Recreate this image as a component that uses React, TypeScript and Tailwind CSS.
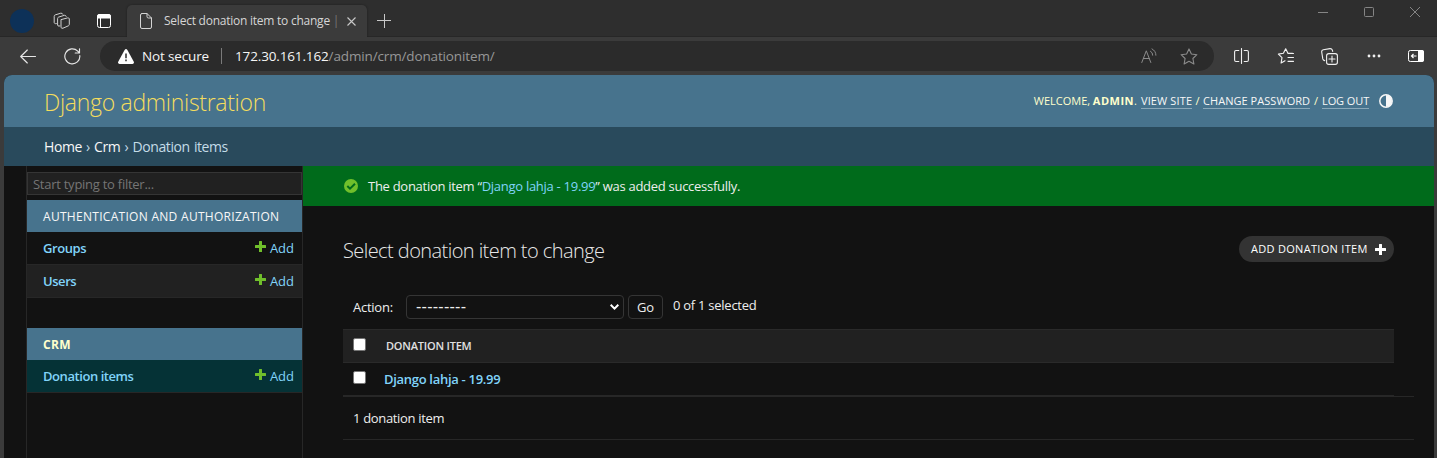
import React from "react";

const stroke = { fill: "none", strokeLinecap: "round", strokeLinejoin: "round" } as const;

function TabStrip() {
  return (
    <div className="flex h-[37px] border-b border-[#272727] bg-[#2e2e2e]">
      <div className="mt-[9px] ml-[10px] size-6 rounded-full bg-[#0d3158]" />
      <svg className="mt-[12px] ml-[19px]" width="18" height="18" viewBox="0 0 18 18" stroke="#d0d0d0" strokeWidth="1" {...stroke}>
        <path d="M8.2 7.6 14.6 5.9Q16 5.6 16.3 6.8V12.4Q16.3 13.4 15.4 13.8L10 16.2Q8.3 16.8 8 15.2V8.2Q8 7.7 8.6 7.5Z" />
        <path d="M6.8 13.9 6 14.1Q4.8 14.2 4.6 13V6.6Q4.6 5.4 5.6 5.1L11.4 3.3Q12.8 3 13.2 4.4" />
        <path d="M3.4 11.6 2.6 11.7Q1.4 11.6 1.2 10.5V4.4Q1.2 3.2 2.2 2.9L7.8 1.2Q9.3.9 9.8 2.2" />
      </svg>
      <svg className="mt-[14px] ml-[26px]" width="14" height="14" viewBox="0 0 14 14">
        <rect x=".5" y=".5" width="13" height="13" rx="2" fill="none" stroke="#fff" />
        <path d="M0 4.5V2.5Q0 0 2.5 0H11.5Q14 0 14 2.5V4.5Z" fill="#fff" />
        <path d="M3.5 4V14" stroke="#fff" />
      </svg>
      <div className="mt-[5px] ml-[16px] flex h-8 w-[240px] rounded-t-[5px] bg-[#3b3b3b] shadow-[0_0_2px_#1c1c1c]">
        <svg className="mt-[8px] ml-[13px]" width="12" height="16" viewBox="0 0 12 16" stroke="#d4d4d4" {...stroke}>
          <path d="M2 .5H7L11.5 5V14Q11.5 15.5 10 15.5H2Q.5 15.5.5 14V2Q.5.5 2 .5ZM7 .5V3.6Q7 5 8.4 5H11.5" />
        </svg>
        <div className="mt-[7px] ml-[12px] w-[173px] text-[12px] leading-[18px] tracking-[-0.24px] whitespace-nowrap text-[#d6d6d6]">
          Select donation item to change <span className="text-[#777]">|</span>
        </div>
        <svg className="mt-[12px] ml-[10px]" width="9" height="9" viewBox="0 0 9 9" stroke="#c9c9c9" strokeWidth="1.1">
          <path d="M.5.5 8.5 8.5M8.5.5.5 8.5" />
        </svg>
      </div>
      <svg className="mt-[14px] ml-[10px]" width="14" height="14" viewBox="0 0 14 14" stroke="#c8c8c8">
        <path d="M7.5 0V14M0 6.5H14" />
      </svg>
      <div className="ml-auto flex pt-[7px]">
        <svg width="10" height="11" viewBox="0 0 10 11" stroke="#858585"><path d="M0 5.5H10" /></svg>
        <svg className="ml-[36px]" width="10" height="10" viewBox="0 0 10 10" fill="none" stroke="#858585"><rect x=".5" y=".5" width="9" height="9" rx="1" /></svg>
        <svg className="mr-[17px] ml-[36px]" width="10" height="10" viewBox="0 0 10 10" stroke="#858585"><path d="M0 0 10 10M10 0 0 10" /></svg>
      </div>
    </div>
  );
}

function Toolbar() {
  return (
    <div className="flex h-[38px] items-center bg-[#3b3b3b]">
      <svg className="ml-5" width="16" height="15" viewBox="0 0 16 15" stroke="#e6e6e6" strokeWidth="1.15" {...stroke}>
        <path d="M15.5 7.5H.8M7.3 1 .7 7.5 7.3 14" />
      </svg>
      <svg className="ml-7" width="17" height="17" viewBox="0 0 17 17" stroke="#e6e6e6" strokeWidth="1.15" {...stroke}>
        <path d="M15.8 7.6A7.5 7.5 0 1 1 13.7 3.1L15.5 4.9M15.5.8V5H11.2" />
      </svg>
      <div className="ml-[19px] flex h-[30px] w-[1114px] items-center rounded-full bg-[#2b2b2b]">
        <svg className="ml-[18px]" width="16" height="15" viewBox="0 0 16 15">
          <path d="M6.6.9Q8-.8 9.4.9L15.8 12.7Q16.4 14.8 14.5 15H1.5Q-.4 14.8.2 12.7Z" fill="#fff" />
          <path d="M8 4.5V9.2M8 10.6V12.2" stroke="#2b2b2b" strokeWidth="1.5" />
        </svg>
        <span className="ml-2 w-[68px] text-[13.5px] leading-[18px] tracking-[-0.15px] whitespace-nowrap text-[#f5f5f5]">Not secure</span>
        <div className="ml-[11px] h-4 w-px bg-[#7a7a7a]" />
        <span className="ml-[13px] text-[13.5px] leading-[18px] tracking-[-0.14px] whitespace-nowrap text-[#979797]">
          <span className="text-[#f5f5f5]">172.30.161.162</span>/admin/crm/donationitem/
        </span>
        <svg className="ml-auto" width="16" height="16" viewBox="0 0 16 16" stroke="#8b8b8b" {...stroke}>
          <path d="M.8 14.5 5.3 2.8 9.8 14.5M2.4 10.5H8.2M9.5 3.2Q11.8 4.4 11.7 7.2M11 .9Q15 3 14.9 7.2" />
        </svg>
        <svg className="mr-4 ml-[23px]" width="18" height="17" viewBox="0 0 18 17" stroke="#8b8b8b" strokeWidth="1.1" {...stroke}>
          <path d="M9 .9 11.4 6 16.9 6.7 12.9 10.5 13.9 16 9 13.3 4.1 16 5.1 10.5 1.1 6.7 6.6 6Z" />
        </svg>
      </div>
      <svg className="ml-5" width="15" height="16" viewBox="0 0 15 16" stroke="#f0f0f0" strokeWidth="1.1" {...stroke}>
        <path d="M7.5.5V15.5M4.8 2.5H2Q.6 2.5.6 4V12Q.6 13.5 2 13.5H4.8M10.2 2.5H13Q14.4 2.5 14.4 4V12Q14.4 13.5 13 13.5H10.2" />
      </svg>
      <svg className="ml-[28px]" width="18" height="16" viewBox="0 0 18 16" stroke="#f0f0f0" strokeWidth="1.15" {...stroke}>
        <path d="M15.5 5.3 10.8 5 8.7.8 6.4 5.3 1.4 6.1 5 9.7 4.1 15 8 12.8M11 5.5H16.5M11 9.5H16.5M11 13.3H16.5" />
      </svg>
      <svg className="ml-[26px]" width="17" height="17" viewBox="0 0 17 17" stroke="#f0f0f0" strokeWidth="1.1" {...stroke}>
        <rect x="5.6" y="5.6" width="10.8" height="10.8" rx="2.2" />
        <path d="M11 8V14M8 11H14M3.7 12.6Q2.1 12.4 1.8 10.9L.7 4Q.5 2.2 2.3 1.8L9 .6Q10.8.5 11.4 2.2L11.7 3.4" />
      </svg>
      <svg className="ml-[29px]" width="14" height="4" viewBox="0 0 14 4" fill="#f0f0f0">
        <circle cx="2" cy="2" r="1.4" /><circle cx="7" cy="2" r="1.4" /><circle cx="12" cy="2" r="1.4" />
      </svg>
      <svg className="ml-[27px]" width="16" height="12" viewBox="0 0 16 12">
        <rect x=".5" y=".5" width="15" height="11" rx="1.8" fill="none" stroke="#fff" />
        <path d="M10 0H14Q16 0 16 2V10Q16 12 14 12H10Z" fill="#fff" />
        <path d="M8.5 6H3.5M5.5 4 3.5 6 5.5 8" stroke="#fff" strokeWidth="1.2" fill="none" />
      </svg>
    </div>
  );
}

function Plus({ className, fill }: { className?: string; fill: string }) {
  return (
    <svg className={className} width="11" height="11" viewBox="0 0 11 11" fill={fill}>
      <path d="M4 .5Q4 0 4.5 0H6.5Q7 0 7 .5V4H10.5Q11 4 11 4.5V6.5Q11 7 10.5 7H7V10.5Q7 11 6.5 11H4.5Q4 11 4 10.5V7H.5Q0 7 0 6.5V4.5Q0 4 .5 4H4Z" />
    </svg>
  );
}

function ModelRow({ name, className }: { name: string; className: string }) {
  return (
    <div className={"flex h-[33px] border-b border-[#272727] pr-2 pl-4 text-[13px] leading-[32px] text-[#81d4fa] " + className}>
      <a className="font-semibold tracking-[-0.44px]">{name}</a>
      <Plus className="mt-[9px] ml-auto" fill="#70bf2b" />
      <a className="ml-1 w-6 tracking-[-0.1px]">Add</a>
    </div>
  );
}

function Sidebar() {
  return (
    <nav className="ml-[22px] w-[277px] border-x border-[#272727] pt-[6px]">
      <div className="h-[23px] w-[275px] border border-[#353535] bg-[#212121] pl-[5px] text-[13px] leading-[23px] tracking-[-0.26px] text-[#757575]">
        Start typing to filter...
      </div>
      <div className="mt-[5px] h-8 bg-[#47738d] pl-4 text-[12px] leading-[33px] tracking-[0.29px] whitespace-nowrap text-[#f7f7f7]">
        AUTHENTICATION AND AUTHORIZATION
      </div>
      <ModelRow name="Groups" className="bg-[#121212]" />
      <ModelRow name="Users" className="bg-[#212121]" />
      <div className="mt-[30px] h-8 bg-[#47738d] pl-4 text-[12px] leading-[33px] font-bold tracking-[0.3px] text-[#ffffcc]">CRM</div>
      <ModelRow name="Donation items" className="bg-[#053236]" />
    </nav>
  );
}

function Content() {
  const box = "block size-[13px] appearance-none rounded-[2px] border border-[#767676] bg-white";
  return (
    <main className="flex-1">
      <div className="flex h-10 items-center bg-[#006b1b] text-[13px] leading-[20px] tracking-[-0.28px] text-[#eeeeee]">
        <svg className="ml-[41px]" width="14" height="14" viewBox="0 0 14 14">
          <circle cx="7" cy="7" r="7" fill="#70bf2b" />
          <path d="M3.3 7 6 9.7 11 4.8" fill="none" stroke="#006b1b" strokeWidth="2" />
        </svg>
        <p className="ml-[10px] whitespace-nowrap">
          The donation item “<a className="text-[#81d4fa]">Django lahja - 19.99</a>” was added successfully.
        </p>
      </div>
      <div className="flex pt-[30px] pr-10 pl-10">
        <h1 className="pt-[2px] text-[20px] leading-[26px] font-light tracking-[-0.57px] whitespace-nowrap text-[#e8e8e8]">
          Select donation item to change
        </h1>
        <a className="ml-auto flex h-[26px] w-[155px] items-center rounded-full bg-[#333333] pl-3 text-[11px] leading-[26px] tracking-[0.3px] whitespace-nowrap text-white">
          ADD DONATION ITEM
          <Plus className="mr-[8px] ml-auto" fill="#fff" />
        </a>
      </div>
      <div className="mt-[31px] flex h-6 pl-[50px] text-[13px] leading-[24px] tracking-[-0.26px] whitespace-nowrap text-[#eeeeee]">
        <label className="w-[53px] tracking-[-0.25px]">Action:</label>
        <div className="flex w-[218px] items-center justify-between rounded-[4px] border border-[#353535] pr-[4px] pl-[9px]">
          <span className="font-['Liberation_Sans',sans-serif] text-[16px] tracking-[0.25px]">---------</span>
          <svg width="9" height="6" viewBox="0 0 9 6" fill="none" stroke="#fff" strokeWidth="2"><path d="M.7.8 4.5 4.6 8.3.8" /></svg>
        </div>
        <button className="ml-1 w-[35px] rounded-[4px] border border-[#353535] text-[13px] leading-[22px]">Go</button>
        <span className="ml-[10px] leading-[21px]">0 of 1 selected</span>
      </div>
      <div className="mt-[10px] mr-10 ml-10">
        <div className="flex h-[34px] border-y border-[#2a2a2a] bg-[#212121] pl-[10px]">
          <input type="checkbox" className={box + " mt-[8px]"} />
          <span className="ml-5 text-[11px] leading-[32px] font-semibold tracking-[-0.2px] text-[#e0e0e0]">DONATION ITEM</span>
        </div>
        <div className="flex h-[33px] border-b border-[#272727] pl-[10px]">
          <input type="checkbox" className={box + " mt-[8px]"} />
          <a className="ml-[18px] text-[13px] leading-[33px] font-semibold tracking-[-0.3px] text-[#81d4fa]">Django lahja - 19.99</a>
        </div>
      </div>
      <p className="mr-5 ml-10 h-[44px] border-y border-[#272727] pl-[10px] text-[13px] leading-[43px] tracking-[-0.33px] text-[#eeeeee]">
        1 donation item
      </p>
    </main>
  );
}

export default function App() {
  return (
    <div className="flex h-[458px] w-[1437px] flex-col overflow-hidden bg-[#3b3b3b] font-['Open_Sans','Noto_Sans',sans-serif]">
      <TabStrip />
      <Toolbar />
      <div className="mr-[3px] ml-1 flex flex-1 flex-col overflow-hidden rounded-t-[8px] bg-[#121212]">
        <header className="flex h-[52px] shrink-0 bg-[#47738d] pr-[41px] pl-10">
          <h1 className="text-[23px] leading-[55px] font-light tracking-[-0.3px] whitespace-nowrap text-[#f5dd5d]">Django administration</h1>
          <div className="ml-auto flex pt-[18px] text-[11px] leading-[16px] whitespace-nowrap text-[#ffffcc]">
            <span className="w-[59px]">WELCOME,</span>
            <strong className="tracking-[0.5px]">ADMIN</strong>
            <span className="w-[7px]">.</span>
            <a className="h-4 w-[51px] border-b border-[#8aa8b9] tracking-[0.12px] text-[#f7f7f7]">VIEW SITE</a>
            <span className="w-[11px] text-center">/</span>
            <a className="h-4 w-[107px] border-b border-[#8aa8b9] tracking-[0.05px] text-[#f7f7f7]">CHANGE PASSWORD</a>
            <span className="w-3 text-center">/</span>
            <a className="h-4 w-[47px] border-b border-[#8aa8b9] tracking-[-0.1px] text-[#f7f7f7]">LOG OUT</a>
            <svg className="mt-[1px] ml-[10px]" width="14" height="14" viewBox="0 0 14 14">
              <circle cx="7" cy="7" r="6.2" fill="none" stroke="#f7f7f7" strokeWidth="1.5" />
              <path d="M7 1A6 6 0 0 1 7 13Z" fill="#f7f7f7" />
            </svg>
          </div>
        </header>
        <div className="h-[39px] shrink-0 bg-[#294a5c] pl-10 text-[14px] leading-[40px] tracking-[-0.42px] [word-spacing:1px] whitespace-nowrap text-[#c4dce8]">
          <a className="text-[#f7f7f7]">Home</a> › <a className="text-[#f7f7f7]">Crm</a> › Donation items
        </div>
        <div className="flex flex-1">
          <Sidebar />
          <Content />
        </div>
      </div>
    </div>
  );
}
